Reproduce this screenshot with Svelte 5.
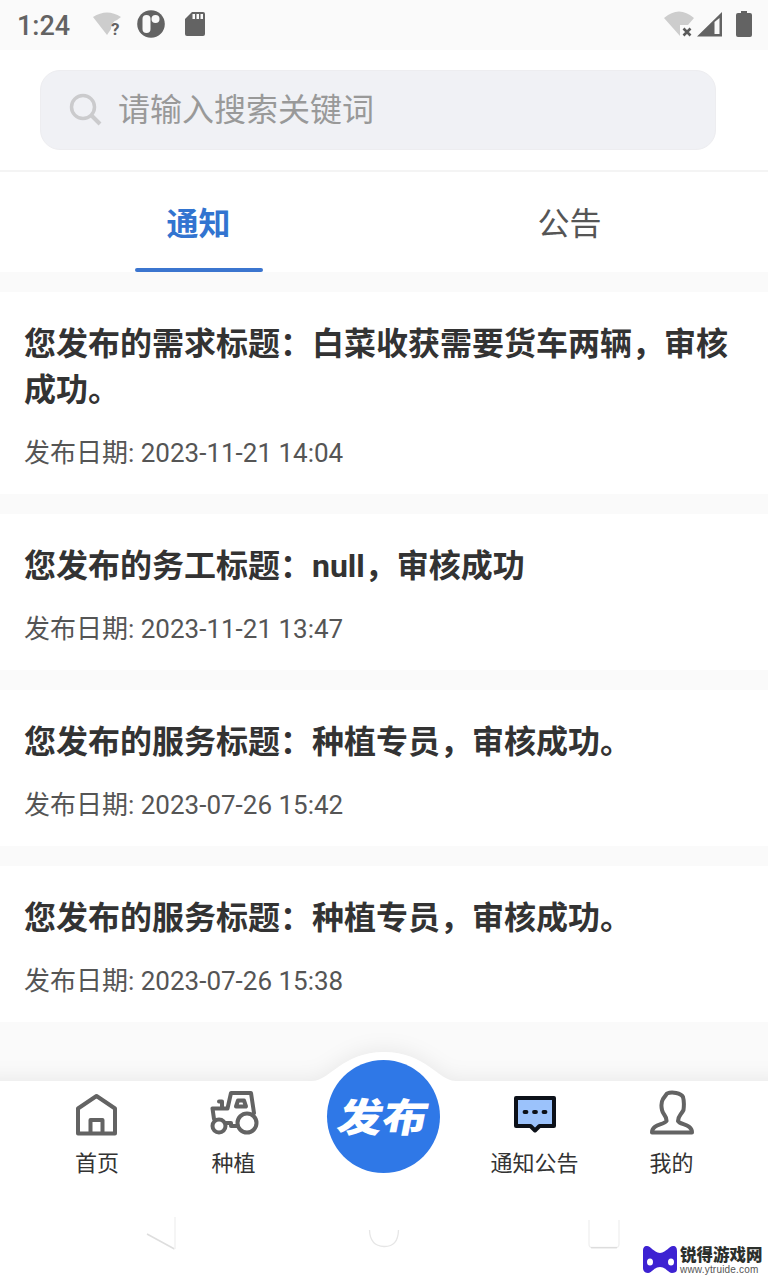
<script>
  let keyword = '';
  let activeTab = 0;

  const tabs = ['通知', '公告'];

  const notices = [
    { title: '您发布的需求标题：白菜收获需要货车两辆，审核成功。', date: '2023-11-21 14:04' },
    { title: '您发布的务工标题：null，审核成功', date: '2023-11-21 13:47' },
    { title: '您发布的服务标题：种植专员，审核成功。', date: '2023-07-26 15:42' },
    { title: '您发布的服务标题：种植专员，审核成功。', date: '2023-07-26 15:38' }
  ];
</script>

<div class="page">
  <header class="status">
    <span class="time">1:24</span>
    <svg class="status-left" width="120" height="50" viewBox="90 0 120 50">
      <path d="M93 17Q107 8 121 17L117 20Q111 22 111 29L107 35Z" fill="#cdcdcd" />
      <text x="111" y="34.500" class="mark">?</text>
      <circle cx="151" cy="24" r="13.800" fill="#636363" />
      <rect x="142.500" y="15" width="8" height="18" rx="4" fill="#fafafa" />
      <circle cx="155.500" cy="19" r="4" fill="#fafafa" />
      <path d="M192 12h11q2 0 2 2v20q0 2-2 2h-16q-2 0-2-2V19Z" fill="#636363" />
      <path d="M192.500 14h2.500v5h-2.500zM196.500 14h2.500v5h-2.500zM200.500 14h2.500v5h-2.500z" fill="#fafafa" />
    </svg>
    <svg class="status-right" width="108" height="50" viewBox="660 0 108 50">
      <path d="M664 18Q679 5 694 18L688 25H680V36Z" fill="#cdcdcd" />
      <path d="M683.500 28.500l7 7m0-7l-7 7" stroke="#5a5a5a" stroke-width="2.600" />
      <path d="M697 36.500L722 12v24.500ZM714.500 22v12h5V18Z" fill="#636363" fill-rule="evenodd" />
      <path d="M741 11h6v2h3q2 0 2 2v20q0 2-2 2h-12q-2 0-2-2V15q0-2 2-2h3Z" fill="#636363" />
    </svg>
  </header>

  <div class="search">
    <label class="search-box">
      <svg width="34" height="34" viewBox="0 0 34 34" fill="none" stroke="#cbcbcd">
        <circle cx="14" cy="14" r="11.500" stroke-width="3.500" />
        <path d="M22.500 22.500l8.500 8.500" stroke-width="4" />
      </svg>
      <input bind:value={keyword} placeholder="请输入搜索关键词" />
    </label>
  </div>

  <nav class="tabs">
    {#each tabs as tab, i}
      <button class:active={activeTab === i} on:click={() => (activeTab = i)}>{tab}</button>
    {/each}
  </nav>

  <main>
    {#each notices as notice}
      <article>
        <h2>{notice.title}</h2>
        <p>发布日期: {notice.date}</p>
      </article>
    {/each}
  </main>

  <footer>
    <svg class="bar-bg" width="768" height="240" viewBox="0 0 768 240">
      <path d="M-20 41H312C330 41 342 12 384 12S438 41 456 41H788V260H-20Z" fill="#fff" />
    </svg>
    <div class="tabbar">
      <div class="item home">
        <svg width="50" height="50" viewBox="0 0 50 50" fill="none" stroke="#636363" stroke-width="4" stroke-linejoin="round">
          <path d="M6 18.500L24.500 6 43 18.500V43.500H6ZM18.500 43.500V30h12v13.500" />
        </svg>
        <span>首页</span>
      </div>
      <div class="item plant">
        <svg width="50" height="50" viewBox="0 0 50 50" fill="none" stroke="#636363" stroke-width="4" stroke-linejoin="round" stroke-linecap="round">
          <circle cx="10" cy="36" r="6.500" />
          <circle cx="38" cy="33" r="9.500" />
          <path d="M5 29L3.500 18.500H18.500L22 3H42L45 23M17 33h5v3h6M10 11.500h3V18" />
          <path d="M29 10.500h6l2 6H27Z" />
        </svg>
        <span>种植</span>
      </div>
      <button class="publish"><span>发布</span></button>
      <div class="item notice">
        <svg width="50" height="50" viewBox="0 0 50 50">
          <path d="M6 8H44V36H29.500L25 40.500 20.500 36H6Z" fill="#9bc2fb" stroke="#0c1119" stroke-width="4" stroke-linejoin="round" />
          <path d="M14.500 22h2M24 22h2M33.500 22h2" stroke="#0c1119" stroke-width="3.800" stroke-linecap="round" />
        </svg>
        <span>通知公告</span>
      </div>
      <div class="item mine">
        <svg width="50" height="50" viewBox="0 0 50 50" fill="none" stroke="#636363" stroke-width="4" stroke-linejoin="round">
          <path d="M20 3.500C25 1.500 34 3 36 7Q37.500 12 36.500 20C34 25 31 26 31 31 33 35 45 34 45 42.500H5C5 34 17 35 19.500 31 20 26 16 25 15 20Q13.500 13 16 9Z" />
        </svg>
        <span>我的</span>
      </div>
    </div>
    <svg class="system" width="768" height="60" viewBox="0 1210 768 60" fill="none">
      <path d="M147 1234L174.500 1249" stroke="#dedede" stroke-width="1.500" />
      <path d="M175 1249V1217" stroke="#f2f2f2" stroke-width="1.500" />
      <path d="M369.500 1230Q370 1246 384 1246.500T398.500 1230" stroke="#e6e6e6" stroke-width="1.300" />
      <path d="M589 1220V1244Q589 1247.500 592 1247.500H616Q619 1247.500 619 1244V1220" stroke="#f0f0f0" stroke-width="1.300" />
      <path d="M591 1247.700H617" stroke="#dcdcdc" stroke-width="1.300" />
    </svg>
    <div class="brand">
      <svg width="36" height="28" viewBox="0 0 36 28">
        <path d="M5 0C9 0 11 6 18 7 25 6 27 0 31 0 34 0 35 2 35 5V23C35 26 33 27 30 27 26 27 24 21 18 21S10 27 6 27C3 27 1 25 1 22V5C1 2 2 0 5 0Z" fill="#3d22d2" />
        <ellipse cx="8" cy="16" rx="3" ry="3.500" fill="#fff" />
        <ellipse cx="29" cy="16" rx="3" ry="3.500" fill="#fff" />
      </svg>
      <div>
        <strong>锐得游戏网</strong>
        <small>www.ytruide.com</small>
      </div>
    </div>
  </footer>
</div>

<style>
  .page {
    width: 768px; height: 1280px; overflow: hidden; background: #fafafa;
    display: flex; flex-direction: column;
    font-family: Roboto, "Noto Sans CJK SC", sans-serif; color: #333;
  }
  button, input { border: 0; padding: 0; background: none; font-family: inherit; outline: none; }
  svg { display: block; flex: none; }

  .status { height: 50px; display: flex; align-items: center; flex: none; }
  .time { width: 73px; padding: 2px 0 0 17px; font-size: 27px; font-weight: 500; color: #636363; }
  .status-right { margin-left: auto; }
  .mark { font-size: 17px; font-weight: 700; fill: #636363; }

  .search { height: 120px; flex: none; box-sizing: border-box; padding: 20px 52px 20px 40px; background: #fff; }
  .search-box {
    height: 80px; box-sizing: border-box; border: 1px solid #ededf0; border-radius: 20px; background: #f0f1f5;
    display: flex; align-items: center; gap: 15px; padding-left: 28px;
  }
  .search-box input { flex: 1; height: 50px; font-size: 32px; color: #333; }
  .search-box input::placeholder { color: #999; opacity: 1; }

  .tabs { height: 102px; flex: none; box-sizing: border-box; border-top: 2px solid #f4f4f4; background: #fff; display: flex; padding: 0 13px; }
  .tabs button { flex: 1; font-size: 32px; color: #555; padding-bottom: 2px; position: relative; }
  .tabs button.active { color: #3274d0; font-weight: 700; }
  .tabs button.active::after {
    content: ''; position: absolute; left: 50%; bottom: 0; width: 128px; height: 4px;
    margin-left: -64px; border-radius: 2px; background: #3b75cf;
  }

  main { padding-top: 20px; display: flex; flex-direction: column; gap: 20px; }
  article { background: #fff; padding: 29px 24px 21px; }
  h2 { margin: 0; font-size: 32px; line-height: 46px; font-weight: 700; }
  p { margin: 21px 0 0; font-size: 26px; line-height: 39px; color: #555; }

  footer { position: absolute; left: 0; top: 1040px; width: 768px; height: 240px; }
  .bar-bg { position: absolute; left: 0; top: 0; overflow: visible; filter: drop-shadow(0 -2px 10px rgba(0, 0, 0, 0.07)); }
  .tabbar {
    position: relative; height: 170px; box-sizing: border-box; padding: 20px 29px 0;
    display: grid; grid-template-columns: 136px 137px 163px 139px 135px;
  }
  .item { display: flex; flex-direction: column; align-items: center; padding-top: 30px; }
  .item span { font-size: 22px; line-height: 30px; margin-top: 9px; color: #333; white-space: nowrap; }
  .publish {
    width: 113px; height: 113px; border-radius: 50%; justify-self: center; background: #2f78e7;
    color: #fff; font-size: 45px; font-weight: 900; line-height: 1; white-space: nowrap;
  }
  .publish span { display: inline-block; transform: translateY(2px) scaleY(0.88) skewX(-10deg); }
  .system { position: relative; }
  .brand { position: absolute; left: 642px; top: 206px; display: flex; gap: 2px; }
  .brand strong { display: block; height: 17px; font: 900 16.5px/17px "Noto Sans CJK SC", sans-serif; color: #2c302c; white-space: nowrap; }
  .brand small { display: block; margin-top: 2px; font: 10px/10px "Liberation Sans", sans-serif; color: #555; letter-spacing: 0.2px; white-space: nowrap; }
</style>
